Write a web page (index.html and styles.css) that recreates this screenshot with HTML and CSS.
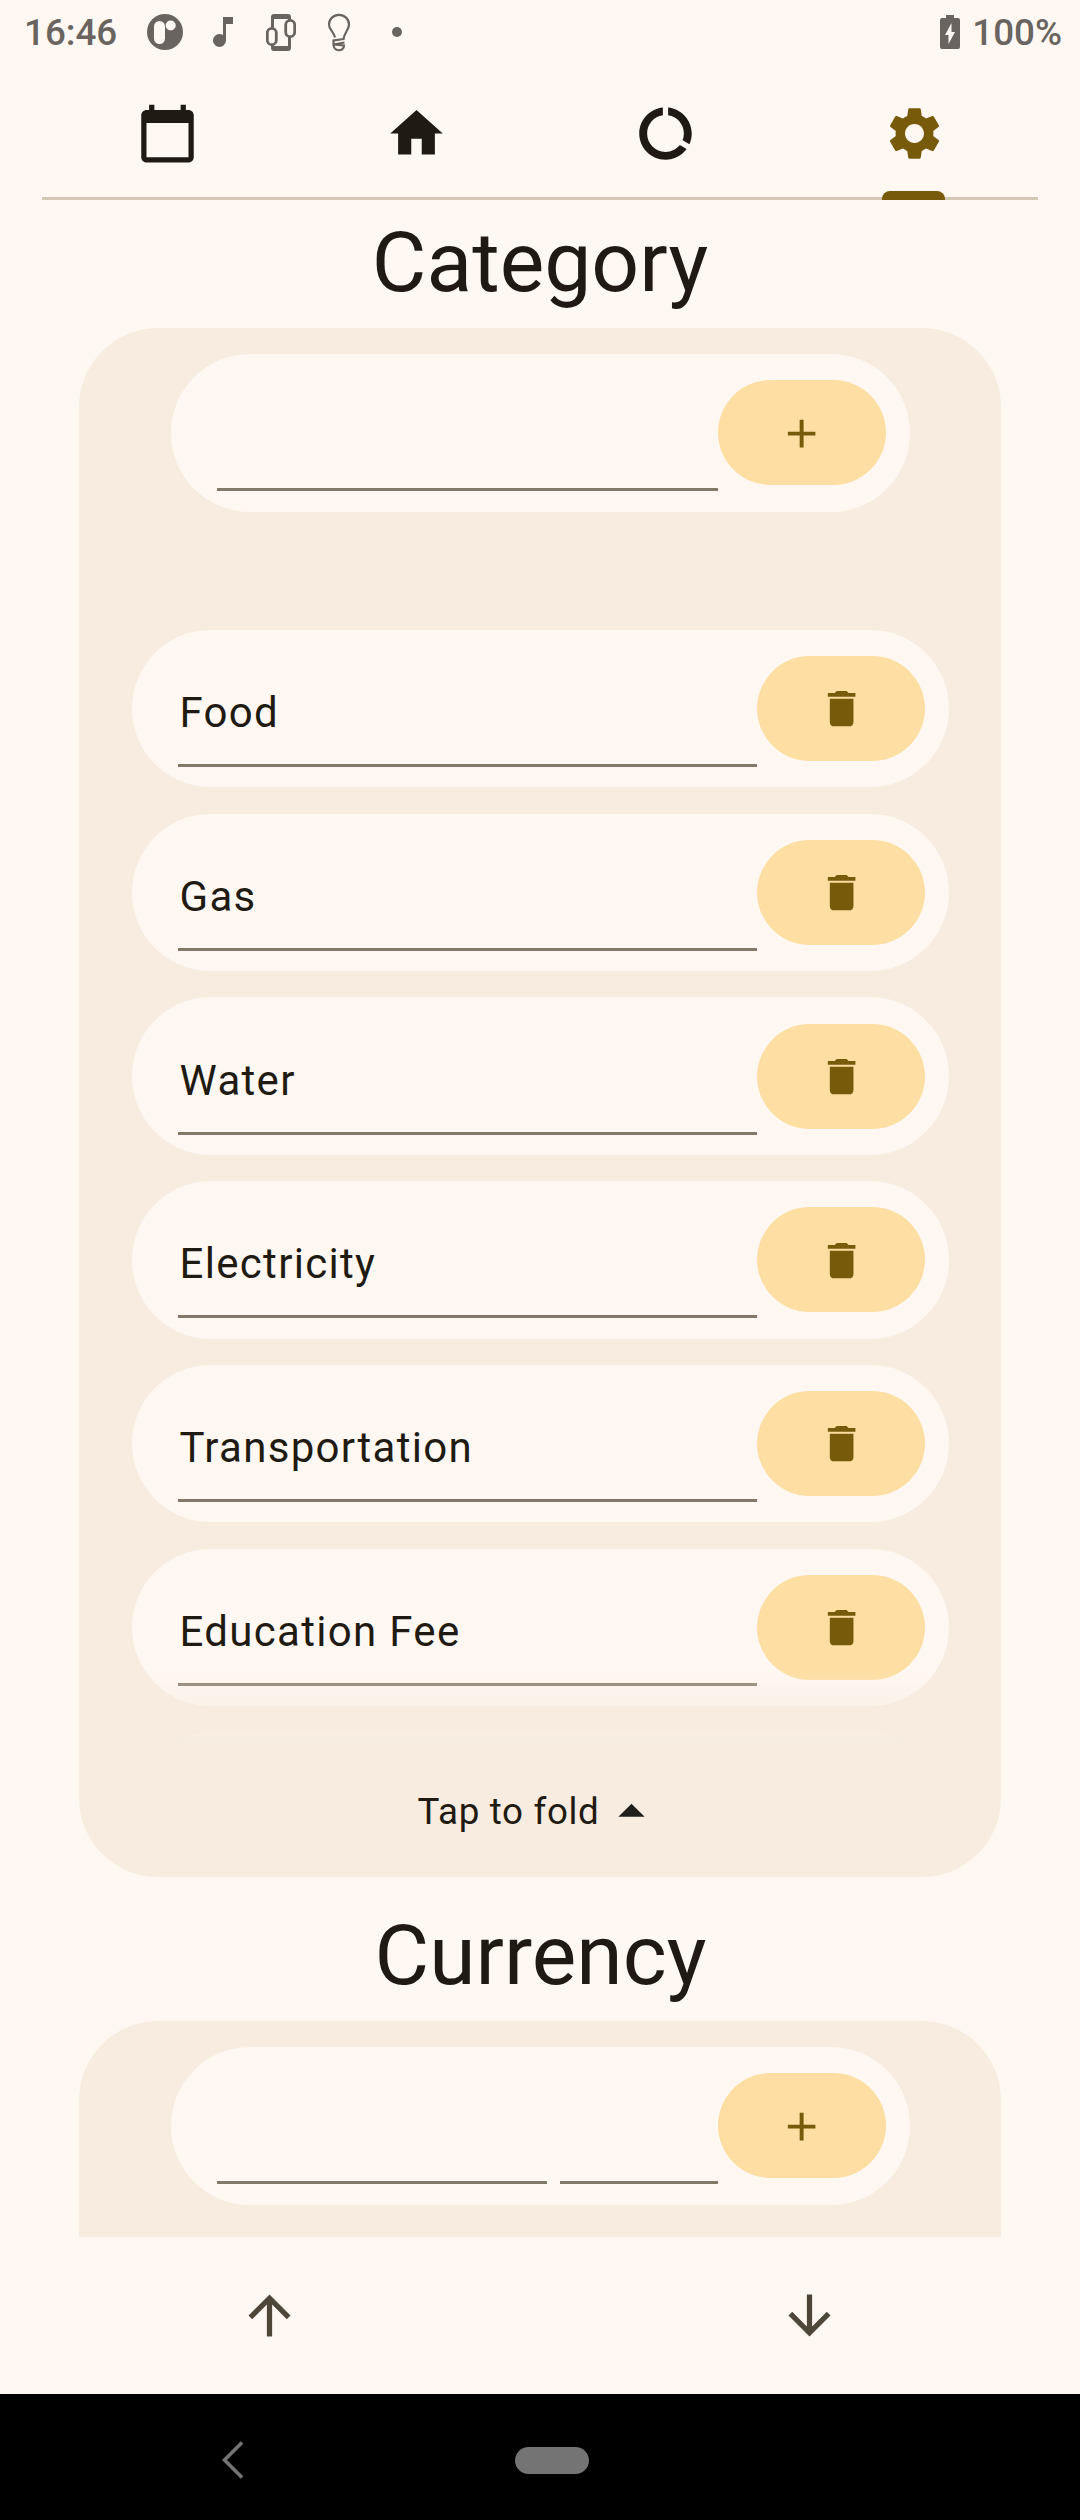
FILE: index.html
```html
<!DOCTYPE html>
<html lang="en">
<head>
<meta charset="utf-8">
<title>Settings</title>
<link rel="stylesheet" href="styles.css">
</head>
<body>
<svg class="sprite" aria-hidden="true">
  <symbol id="trash" viewBox="0 0 24 24"><path d="M6 19c0 1.100.9 2 2 2h8c1.100 0 2-.9 2-2V7H6v12zM19 4h-3.500l-1-1h-5l-1 1H5v2h14V4z"/></symbol>
  <symbol id="plus" viewBox="0 0 24 24"><path d="M19 13h-6v6h-2v-6H5v-2h6V5h2v6h6z"/></symbol>
</svg>
<div class="screen">
  <header class="status">
    <span class="clock">16:46</span>
    <div class="notifications">
      <svg class="n-app" viewBox="0 0 36 36"><circle cx="18" cy="18" r="18"/><rect class="hole" x="7" y="7" width="11" height="23" rx="5.500"/><circle class="hole" cx="23.700" cy="11.500" r="5"/></svg>
      <svg class="n-note" viewBox="0 0 20 30"><path d="M10 0h10v7h-7v16.500A6.500 6.500 0 1 1 10 18z"/></svg>
      <svg class="n-phone" viewBox="0 0 30 37"><path d="M5 14V3a3 3 0 0 1 3-3h14a3 3 0 0 1 3 3v3h-3V5H8v9zM5 31h3v1h14v-9h3v11a3 3 0 0 1-3 3H8a3 3 0 0 1-3-3z"/><rect class="line" x="1.300" y="14.300" width="9" height="16.400" rx="4.500"/><rect class="line" x="19.700" y="6.300" width="9" height="16.400" rx="4.500"/></svg>
      <svg class="n-bulb" viewBox="0 0 22 37"><path class="line" d="M7 23.500C5.500 17 1 16 1 10.500a10 9.700 0 0 1 20 0C21 16 16.500 18 15.500 25L5.500 26.500V30.500L16.500 28.500M5.500 30.500c0 7.500 10.500 7.500 10.500 1z"/></svg>
      <svg class="n-dot" viewBox="0 0 10 10"><circle cx="5" cy="5" r="5"/></svg>
    </div>
    <div class="battery">
      <svg viewBox="0 0 20 34"><path d="M6 0h8v3h4a2 2 0 0 1 2 2v27a2 2 0 0 1-2 2H2a2 2 0 0 1-2-2V5a2 2 0 0 1 2-2h4z"/><path class="hole" d="M11.500 8v9H15L8.500 29v-9H5z"/></svg>
      <span>100%</span>
    </div>
  </header>

  <nav class="tabs">
    <a class="tab"><svg viewBox="0 0 24 24"><path d="M20 3h-1V1h-2v2H7V1H5v2H4c-1.100 0-2 .9-2 2v16c0 1.100.9 2 2 2h16c1.100 0 2-.9 2-2V5c0-1.100-.9-2-2-2zm0 18H4V8h16v13z"/></svg></a>
    <a class="tab"><svg viewBox="0 0 24 24"><path d="M10 20v-6h4v6h5v-8h3L12 3 2 12h3v8z"/></svg></a>
    <a class="tab"><svg viewBox="0 0 24 24"><path d="M13 2.050v3.030c3.390.49 6 3.390 6 6.920 0 .9-.18 1.750-.48 2.540l2.600 1.530c.56-1.240.88-2.620.88-4.070 0-5.180-3.950-9.450-9-9.950zM12 19c-3.870 0-7-3.130-7-7 0-3.530 2.610-6.430 6-6.920V2.050c-5.060.5-9 4.760-9 9.950 0 5.520 4.470 10 9.990 10 3.310 0 6.240-1.610 8.060-4.090l-2.600-1.530C16.170 17.980 14.210 19 12 19z"/></svg></a>
    <a class="tab active"><svg viewBox="0 0 24 24"><path d="M19.140 12.940c.04-.3.060-.61.060-.94 0-.32-.02-.64-.07-.94l2.030-1.580c.18-.14.230-.41.120-.61l-1.920-3.320c-.12-.22-.37-.29-.59-.22l-2.390.96c-.5-.38-1.030-.7-1.620-.94l-.36-2.540c-.04-.24-.24-.41-.48-.41h-3.840c-.24 0-.43.170-.47.410l-.36 2.540c-.59.240-1.130.57-1.620.94l-2.390-.96c-.22-.08-.47 0-.59.220L2.740 8.870c-.12.210-.08.470.12.610l2.030 1.580c-.05.3-.09.630-.09.940s.02.640.07.940l-2.030 1.580c-.18.140-.23.410-.12.610l1.920 3.320c.12.220.37.290.59.220l2.390-.96c.5.380 1.030.7 1.620.94l.36 2.540c.05.240.24.410.48.410h3.840c.24 0 .44-.17.470-.41l.36-2.540c.59-.24 1.130-.56 1.620-.94l2.390.96c.22.080.47 0 .59-.22l1.920-3.320c.12-.22.070-.47-.12-.61l-2.010-1.580zM12 15.600c-1.980 0-3.600-1.620-3.600-3.600s1.620-3.600 3.600-3.600 3.600 1.620 3.600 3.600-1.620 3.600-3.600 3.600z"/></svg></a>
  </nav>

  <main class="content">
    <h1 class="title">Category</h1>
    <section class="card">
      <div class="row add">
        <div class="field"></div>
        <button class="pill"><svg><use href="#plus"/></svg></button>
      </div>
      <div class="list">
        <div class="row"><div class="field">Food</div><button class="pill"><svg><use href="#trash"/></svg></button></div>
        <div class="row"><div class="field">Gas</div><button class="pill"><svg><use href="#trash"/></svg></button></div>
        <div class="row"><div class="field">Water</div><button class="pill"><svg><use href="#trash"/></svg></button></div>
        <div class="row"><div class="field">Electricity</div><button class="pill"><svg><use href="#trash"/></svg></button></div>
        <div class="row"><div class="field">Transportation</div><button class="pill"><svg><use href="#trash"/></svg></button></div>
        <div class="row"><div class="field">Education Fee</div><button class="pill"><svg><use href="#trash"/></svg></button></div>
        <div class="row"></div>
      </div>
      <div class="fold"><span>Tap to fold</span><svg viewBox="0 0 24 24"><path d="M7 14l5-5 5 5z"/></svg></div>
    </section>

    <h1 class="title second">Currency</h1>
    <section class="card">
      <div class="row add">
        <div class="field"></div>
        <div class="field short"></div>
        <button class="pill"><svg><use href="#plus"/></svg></button>
      </div>
    </section>
  </main>

  <footer class="actions">
    <svg viewBox="0 0 24 24"><path d="M4 12l1.410 1.410L11 7.830V20h2V7.830l5.580 5.590L20 12l-8-8-8 8z"/></svg>
    <svg viewBox="0 0 24 24"><path d="M20 12l-1.410-1.410L13 16.170V4h-2v12.170l-5.580-5.590L4 12l8 8 8-8z"/></svg>
  </footer>
  <div class="system">
    <svg viewBox="0 0 22 38"><path d="M20 1.500L2.500 19 20 36.500"/></svg>
    <span class="home"></span>
  </div>
</div>
</body>
</html>
```
FILE: styles.css
```css
* { box-sizing: border-box; }

body {
  margin: 0;
  background: #fff8f2;
  color: #1f1b13;
  font-family: Roboto, "Noto Sans", sans-serif;
}

.sprite { position: absolute; width: 0; height: 0; }

.screen {
  display: flex;
  flex-direction: column;
  width: 1080px;
  height: 2520px;
  overflow: hidden;
}

svg { display: block; flex: none; }

/* Status bar */
.status {
  display: flex;
  align-items: center;
  height: 63px;
  padding: 1px 18px 0 24px;
  color: #69645f;
  fill: #69645f;
  font-size: 36.75px;
  font-weight: 500;
  line-height: 63px;
}
.clock { width: 123px; }
.hole { fill: #fff8f2; }
.line { fill: none; stroke: #69645f; stroke-width: 2.8; }
.notifications { display: flex; align-items: center; }
.n-app { width: 36px; height: 36px; }
.n-note { width: 20px; height: 30px; margin-left: 30px; }
.n-phone { width: 30px; height: 37px; margin-left: 33px; }
.n-bulb { width: 22px; height: 37px; margin-left: 32px; overflow: visible; }
.n-bulb .line { stroke-width: 2.2; }
.n-dot { width: 10px; height: 10px; margin-left: 42px; }
.battery { display: flex; align-items: center; gap: 12px; margin-left: auto; }
.battery svg { width: 20px; height: 34px; }

/* Tabs */
.tabs {
  display: flex;
  height: 137px;
  margin: 0 42px;
  border-bottom: 3px solid #d4c8b4;
}
.tab {
  position: relative;
  display: flex;
  flex: 1;
  justify-content: center;
  padding: 39px 0 0 1px;
  fill: #1f1b13;
}
.tab svg { width: 63px; height: 63px; }
.tab.active { fill: #785a0b; }
.tab.active::after {
  content: "";
  position: absolute;
  bottom: -3px;
  left: 93px;
  width: 63px;
  height: 9px;
  border-radius: 8px 8px 0 0;
  background: #785a0b;
}

/* Scrolling content */
.content { height: 2037px; overflow: hidden; }
.title {
  height: 128px;
  margin: 0;
  font-size: 84px;
  font-weight: 400;
  line-height: 126px;
  text-align: center;
}
.title.second { margin-top: 16px; padding-left: 1px; }
.card {
  display: flex;
  flex-direction: column;
  width: 922px;
  height: 1549px;
  margin: 0 auto;
  padding-top: 26px;
  border-radius: 79px;
  background: #f7ecdf;
}
.row {
  display: flex;
  flex: none;
  align-items: flex-start;
  width: 817.5px;
  height: 157.5px;
  padding: 26.25px 24px 0 46.5px;
  border-radius: 79px;
  background: #fff8f2;
}
.row.add { width: 739px; margin: 0 auto; }
.field {
  flex: 1;
  height: 111px;
  padding-left: 1.5px;
  border-bottom: 3px solid #847968;
  font-size: 42px;
  letter-spacing: 1.31px;
  line-height: 114px;
  white-space: nowrap;
}
.field.short { flex: none; width: 158px; margin-left: 13px; }
.pill {
  display: flex;
  align-items: center;
  justify-content: center;
  width: 168px;
  height: 105px;
  padding: 1px 0 0 1px;
  border: 0;
  border-radius: 53px;
  background: #fedea2;
  fill: #785a0b;
}
.pill svg { width: 47.25px; height: 47.25px; }

.list {
  position: relative;
  display: flex;
  flex-direction: column;
  gap: 26.25px;
  height: 1117px;
  margin-top: 118.25px;
  padding-left: 52.5px;
  overflow: hidden;
}
.list::after {
  content: "";
  position: absolute;
  inset: auto 0 0;
  height: 79px;
  background: linear-gradient(#f7ecdf00, #f7ecdf);
}
.fold {
  display: flex;
  align-items: center;
  justify-content: center;
  height: 63px;
  margin-top: 33px;
  font-size: 36.75px;
  letter-spacing: 0.66px;
}
.fold svg { width: 63px; height: 63px; fill: #201f1c; }

/* Bottom bars */
.actions {
  display: flex;
  align-items: center;
  justify-content: space-around;
  height: 157px;
  padding-right: 1px;
  fill: #4e4639;
}
.actions svg { width: 63px; height: 63px; }
.system {
  display: flex;
  align-items: center;
  height: 126px;
  padding: 6px 0 0 222px;
  background: #000;
}
.system svg { width: 22px; height: 38px; fill: none; stroke: #747474; stroke-width: 3.6; }
.home {
  width: 74px;
  height: 27px;
  margin-left: 271px;
  border-radius: 14px;
  background: #747474;
}
```
